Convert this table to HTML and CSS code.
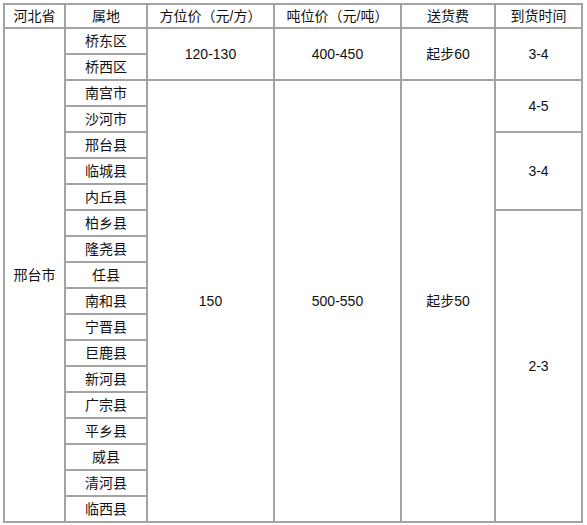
FILE: index.html
```html
<!DOCTYPE html>
<html>
<head>
<meta charset="utf-8">
<link rel="stylesheet" href="styles.css">
</head>
<body>
<table class="price">
  <colgroup>
    <col class="c1"><col class="c2"><col class="c3"><col class="c4"><col class="c5"><col class="c6">
  </colgroup>
  <tr class="head">
    <td>河北省</td><td>属地</td><td>方位价（元/方）</td><td>吨位价（元/吨）</td><td>送货费</td><td>到货时间</td>
  </tr>
  <tr><td rowspan="19">邢台市</td><td>桥东区</td><td rowspan="2">120-130</td><td rowspan="2">400-450</td><td rowspan="2">起步60</td><td rowspan="2">3-4</td></tr>
  <tr><td>桥西区</td></tr>
  <tr><td>南宫市</td><td rowspan="17">150</td><td rowspan="17">500-550</td><td rowspan="17">起步50</td><td rowspan="2">4-5</td></tr>
  <tr><td>沙河市</td></tr>
  <tr><td>邢台县</td><td rowspan="3">3-4</td></tr>
  <tr><td>临城县</td></tr>
  <tr><td>内丘县</td></tr>
  <tr><td>柏乡县</td><td rowspan="12">2-3</td></tr>
  <tr><td>隆尧县</td></tr>
  <tr><td>任县</td></tr>
  <tr><td>南和县</td></tr>
  <tr><td>宁晋县</td></tr>
  <tr><td>巨鹿县</td></tr>
  <tr><td>新河县</td></tr>
  <tr><td>广宗县</td></tr>
  <tr><td>平乡县</td></tr>
  <tr><td>威县</td></tr>
  <tr><td>清河县</td></tr>
  <tr><td>临西县</td></tr>
</table>
</body>
</html>
```

FILE: styles.css
```css
html, body {
  margin: 0;
  padding: 0;
  background: #ffffff;
}

body {
  padding: 3px;
  font-family: "Liberation Sans", "Noto Sans CJK SC", sans-serif;
  font-size: 14px;
  color: #111111;
}

.price {
  border-collapse: separate;
  border-spacing: 0;
  border: 1px solid #a3a3a3;
  table-layout: fixed;
  width: 580px;
}

.c1 { width: 61px; }
.c2 { width: 82px; }
.c3 { width: 127px; }
.c4 { width: 127px; }
.c5 { width: 94px; }
.c6 { width: 87px; }

.price tr {
  height: 26px;
}

.price tr.head {
  height: 24px;
}

.price td {
  border: 1px solid #a3a3a3;
  padding: 0;
  text-align: center;
  vertical-align: middle;
  line-height: 18px;
  white-space: nowrap;
}
```
